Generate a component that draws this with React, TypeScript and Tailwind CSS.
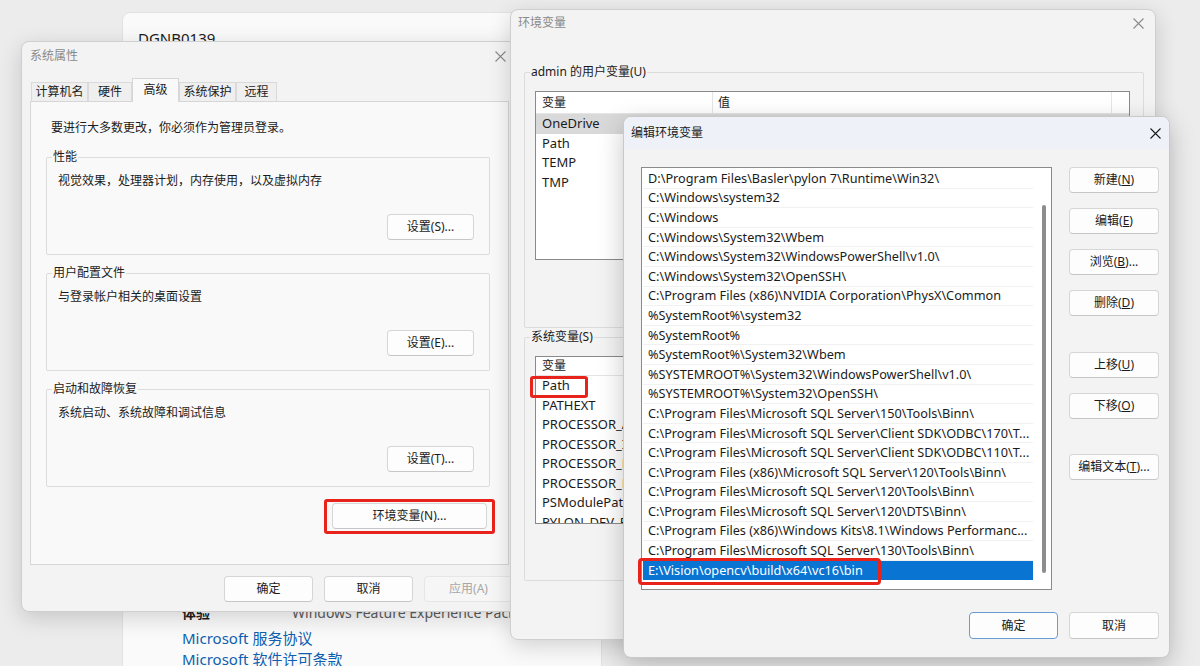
import React from "react";

const B = "\\";
const mk = (s: string) => s.split("/").join(B);

const editPaths: string[] = [
  "D:/Program Files/Basler/pylon 7/Runtime/Win32/",
  "C:/Windows/system32",
  "C:/Windows",
  "C:/Windows/System32/Wbem",
  "C:/Windows/System32/WindowsPowerShell/v1.0/",
  "C:/Windows/System32/OpenSSH/",
  "C:/Program Files (x86)/NVIDIA Corporation/PhysX/Common",
  "%SystemRoot%/system32",
  "%SystemRoot%",
  "%SystemRoot%/System32/Wbem",
  "%SYSTEMROOT%/System32/WindowsPowerShell/v1.0/",
  "%SYSTEMROOT%/System32/OpenSSH/",
  "C:/Program Files/Microsoft SQL Server/150/Tools/Binn/",
  "C:/Program Files/Microsoft SQL Server/Client SDK/ODBC/170/T...",
  "C:/Program Files/Microsoft SQL Server/Client SDK/ODBC/110/T...",
  "C:/Program Files (x86)/Microsoft SQL Server/120/Tools/Binn/",
  "C:/Program Files/Microsoft SQL Server/120/Tools/Binn/",
  "C:/Program Files/Microsoft SQL Server/120/DTS/Binn/",
  "C:/Program Files (x86)/Windows Kits/8.1/Windows Performanc...",
  "C:/Program Files/Microsoft SQL Server/130/Tools/Binn/",
].map(mk);
const selectedPath = mk("E:/Vision/opencv/build/x64/vc16/bin");

const sysVars = ["PATHEXT", "PROCESSOR_A", "PROCESSOR_I", "PROCESSOR_L", "PROCESSOR_R", "PSModulePat", "PYLON_DEV_E"];

function CloseX({ className = "" }: { className?: string }) {
  return (
    <svg width="11" height="11" viewBox="0 0 11 11" className={className}>
      <path d="M0.5 0.5L10.5 10.5M10.5 0.5L0.5 10.5" stroke="currentColor" strokeWidth="1.1" fill="none" />
    </svg>
  );
}

function Btn({
  children,
  className = "",
  variant = "normal",
}: {
  children: React.ReactNode;
  className?: string;
  variant?: "normal" | "primary" | "disabled";
}) {
  const v =
    variant === "primary"
      ? "bg-[#fdfdfd] border-[#6b9bd3] text-[#1b1b1b]"
      : variant === "disabled"
      ? "bg-[#f6f6f6] border-[#e6e6e6] text-[#a6a6a6]"
      : "bg-[#fdfdfd] border-[#d6d6d6] border-b-[#c6c6c6] text-[#1b1b1b]";
  return (
    <div className={`flex items-center justify-center rounded-[4px] border text-[12px] leading-none ${v} ${className}`}>
      {children}
    </div>
  );
}

function Group({
  label,
  className = "",
  labelBg,
  children,
}: {
  label: string;
  className?: string;
  labelBg: string;
  children?: React.ReactNode;
}) {
  return (
    <div className={`relative border border-[#dcdcdc] rounded-[2px] ${className}`}>
      <span className={`absolute left-[5px] top-[-9px] px-[1px] text-[12px] leading-[16px] text-[#1b1b1b] ${labelBg}`}>
        {label}
      </span>
      {children}
    </div>
  );
}

function SettingsBackground() {
  return (
    <div className="absolute left-[122px] top-[12px] w-[480px] h-[720px] bg-[#fafafa] border border-[#e2e2e2] rounded-[8px] flex flex-col">
      <div className="pl-[15px] pt-[15px] text-[15px] leading-[20px] text-[#1b1b1b]">DGNB0139</div>
      <div className="mt-[554px] flex items-center h-[20px] text-[14px]">
        <span className="ml-[59px] w-[110px] font-semibold text-[#1b1b1b]">体验</span>
        <span className="text-[#5c5c5c]">Windows Feature Experience Pack</span>
      </div>
      <div className="mt-[6px] ml-[59px] text-[15px] leading-[21px] text-[#0e5fb0]">Microsoft 服务协议</div>
      <div className="ml-[59px] text-[15px] leading-[21px] text-[#0e5fb0]">Microsoft 软件许可条款</div>
    </div>
  );
}

function SystemProperties() {
  const tabs = [
    { t: "计算机名", w: "w-[57px]" },
    { t: "硬件", w: "w-[44px]" },
    { t: "高级", w: "w-[47px]", sel: true },
    { t: "系统保护", w: "w-[57px]" },
    { t: "远程", w: "w-[41px]" },
  ];
  return (
    <div className="absolute left-[21px] top-[41px] w-[496px] h-[571px] bg-[#f3f3f3] border border-[#cfcfcf] rounded-[8px] shadow-[0_6px_22px_rgba(0,0,0,0.16)] flex flex-col">
      <div className="h-[28px] flex items-center justify-between pl-[8px] pr-[10px]">
        <span className="text-[12px] text-[#8a8a8a]">系统属性</span>
        <CloseX className="text-[#8a8a8a]" />
      </div>
      <div className="mt-[8px] h-[24px] flex items-end pl-[9px] -mb-px relative z-10">
        {tabs.map((tab) =>
          tab.sel ? (
            <div
              key={tab.t}
              className={`${tab.w} h-[24px] bg-[#f9f9f9] border border-b-0 border-[#d6d6d6] flex items-start justify-center pt-[2px] text-[12px] text-[#1b1b1b]`}
            >
              {tab.t}
            </div>
          ) : (
            <div
              key={tab.t}
              className={`${tab.w} h-[20px] bg-[#efefef] border border-[#dadada] border-b-[#d6d6d6] flex items-center justify-center text-[12px] text-[#1b1b1b]`}
            >
              {tab.t}
            </div>
          )
        )}
      </div>
      <div className="relative ml-[8px] w-[479px] h-[464px] bg-[#f9f9f9] border border-[#d6d6d6] flex flex-col pl-[15px] pt-[17px]">
        <div className="pl-[5px] text-[12px] leading-[18px] text-[#1b1b1b]">要进行大多数更改，你必须作为管理员登录。</div>
        <Group label="性能" labelBg="bg-[#f9f9f9]" className="mt-[20px] w-[444px] h-[98px] flex flex-col">
          <div className="pl-[11px] pt-[15px] text-[12px] leading-[16px] text-[#1b1b1b]">视觉效果，处理器计划，内存使用，以及虚拟内存</div>
          <Btn className="mt-[25px] self-end mr-[15px] w-[87px] h-[26px]">设置(S)...</Btn>
        </Group>
        <Group label="用户配置文件" labelBg="bg-[#f9f9f9]" className="mt-[18px] w-[444px] h-[98px] flex flex-col">
          <div className="pl-[11px] pt-[15px] text-[12px] leading-[16px] text-[#1b1b1b]">与登录帐户相关的桌面设置</div>
          <Btn className="mt-[25px] self-end mr-[15px] w-[87px] h-[26px]">设置(E)...</Btn>
        </Group>
        <Group label="启动和故障恢复" labelBg="bg-[#f9f9f9]" className="mt-[18px] w-[444px] h-[98px] flex flex-col">
          <div className="pl-[11px] pt-[15px] text-[12px] leading-[16px] text-[#1b1b1b]">系统启动、系统故障和调试信息</div>
          <Btn className="mt-[25px] self-end mr-[15px] w-[87px] h-[26px]">设置(T)...</Btn>
        </Group>
        <Btn className="mt-[16px] ml-[286px] w-[155px] h-[26px]">环境变量(N)...</Btn>
        <div className="absolute left-[293px] top-[397px] w-[171px] h-[35px] border-[3px] border-[#e8231c] rounded-[3px]" />
      </div>
      <div className="mt-[11px] flex gap-[11px] pl-[202px]">
        <Btn className="w-[89px] h-[26px]">确定</Btn>
        <Btn className="w-[89px] h-[26px]">取消</Btn>
        <Btn variant="disabled" className="w-[89px] h-[26px]">应用(A)</Btn>
      </div>
    </div>
  );
}

function EnvVars() {
  return (
    <div className="absolute left-[510px] top-[9px] w-[646px] h-[631px] bg-[#f3f3f3] border border-[#cfcfcf] rounded-[8px] shadow-[0_6px_22px_rgba(0,0,0,0.16)] flex flex-col">
      <div className="h-[26px] flex items-center justify-between pl-[7px] pr-[11px]">
        <span className="text-[12px] text-[#8a8a8a]">环境变量</span>
        <CloseX className="text-[#8a8a8a]" />
      </div>
      <Group label="admin 的用户变量(U)" labelBg="bg-[#f3f3f3]" className="mt-[36px] ml-[13px] w-[620px] h-[256px] pl-[10px] pt-[18px]">
        <div className="w-[595px] h-[169px] bg-white border border-[#8a8a8a] flex flex-col overflow-hidden">
          <div className="h-[22px] flex border-b border-[#e5e5e5] text-[12px] text-[#1b1b1b]">
            <div className="w-[177px] border-r border-[#e5e5e5] flex items-center pl-[6px]">变量</div>
            <div className="w-[399px] border-r border-[#e5e5e5] flex items-center pl-[5px]">值</div>
          </div>
          <div className="h-[19.6px] bg-[#d9d9d9] flex items-center pl-[6px] text-[13px] text-[#1b1b1b]">OneDrive</div>
          {["Path", "TEMP", "TMP"].map((v) => (
            <div key={v} className="h-[19.6px] flex items-center pl-[6px] text-[13px] text-[#1b1b1b]">
              {v}
            </div>
          ))}
        </div>
      </Group>
      <Group label="系统变量(S)" labelBg="bg-[#f3f3f3]" className="mt-[9px] ml-[13px] w-[620px] h-[244px] pl-[10px] pt-[18px]">
        <div className="w-[595px] h-[168px] bg-white border border-[#8a8a8a] flex flex-col overflow-hidden">
          <div className="h-[22px] flex border-b border-[#e5e5e5] text-[12px] text-[#1b1b1b]">
            <div className="w-[177px] border-r border-[#e5e5e5] flex items-center pl-[6px]">变量</div>
          </div>
          <div className="h-[19.6px] flex items-center pl-[6px] text-[13px] text-[#1b1b1b]">Path</div>
          {sysVars.map((v) => (
            <div key={v} className="h-[19.6px] flex items-center pl-[6px] text-[13px] text-[#1b1b1b] whitespace-nowrap">
              {v}
            </div>
          ))}
        </div>
      </Group>
      <div className="absolute left-[19px] top-[366px] w-[58px] h-[22px] border-[3px] border-[#e8231c] rounded-[3px]" />
    </div>
  );
}

function EditEnv() {
  return (
    <div className="absolute left-[623px] top-[116px] w-[547px] h-[542px] bg-[#f3f3f3] border border-[#c9c9c9] rounded-[8px] shadow-[0_8px_26px_rgba(0,0,0,0.22)] flex flex-col overflow-hidden">
      <div className="h-[32px] bg-[#eef2f8] flex items-center justify-between pl-[7px] pr-[8px]">
        <span className="text-[12px] text-[#1b1b1b]">编辑环境变量</span>
        <CloseX className="text-[#1b1b1b]" />
      </div>
      <div className="mt-[18px] flex">
        <div className="relative ml-[17px] w-[411px] h-[423px] bg-white border border-[#8a8a8a] pl-[1px] pt-[1px]">
          <div className="flex flex-col w-[390px]">
            {editPaths.map((p) => (
              <div
                key={p}
                className="h-[19.6px] flex items-center pl-[5px] border-b border-[#f1f1f1] text-[12.7px] text-[#1b1b1b] whitespace-nowrap overflow-hidden"
              >
                {p}
              </div>
            ))}
            <div className="h-[19.6px] flex items-center pl-[5px] bg-[#0a74d2] text-[12.7px] text-white whitespace-nowrap">
              {selectedPath}
            </div>
          </div>
          <div className="absolute left-[400px] top-[37px] w-[4px] h-[368px] rounded-full bg-[#8d8d8d]" />
          <div className="absolute left-[-4px] top-[390px] w-[243px] h-[27px] border-[3px] border-[#e8231c] rounded-[4px]" />
        </div>
        <div className="ml-[17px] flex flex-col">
          <Btn className="w-[90px] h-[26px]">新建(<u>N</u>)</Btn>
          <Btn className="mt-[15px] w-[90px] h-[26px]">编辑(<u>E</u>)</Btn>
          <Btn className="mt-[15px] w-[90px] h-[26px]">浏览(<u>B</u>)...</Btn>
          <Btn className="mt-[15px] w-[90px] h-[26px]">删除(<u>D</u>)</Btn>
          <Btn className="mt-[36px] w-[90px] h-[26px]">上移(<u>U</u>)</Btn>
          <Btn className="mt-[15px] w-[90px] h-[26px]">下移(<u>O</u>)</Btn>
          <Btn className="mt-[35px] w-[90px] h-[26px]">编辑文本(<u>T</u>)...</Btn>
        </div>
      </div>
      <div className="mt-[22px] flex gap-[11px] pl-[345px]">
        <Btn variant="primary" className="w-[89px] h-[27px]">确定</Btn>
        <Btn className="w-[90px] h-[27px]">取消</Btn>
      </div>
    </div>
  );
}

export default function App() {
  return (
    <div className="relative w-[1200px] h-[666px] overflow-hidden bg-[#ececec] font-['Noto_Sans','Noto_Sans_CJK_SC',sans-serif]">
      <SettingsBackground />
      <SystemProperties />
      <EnvVars />
      <EditEnv />
    </div>
  );
}
